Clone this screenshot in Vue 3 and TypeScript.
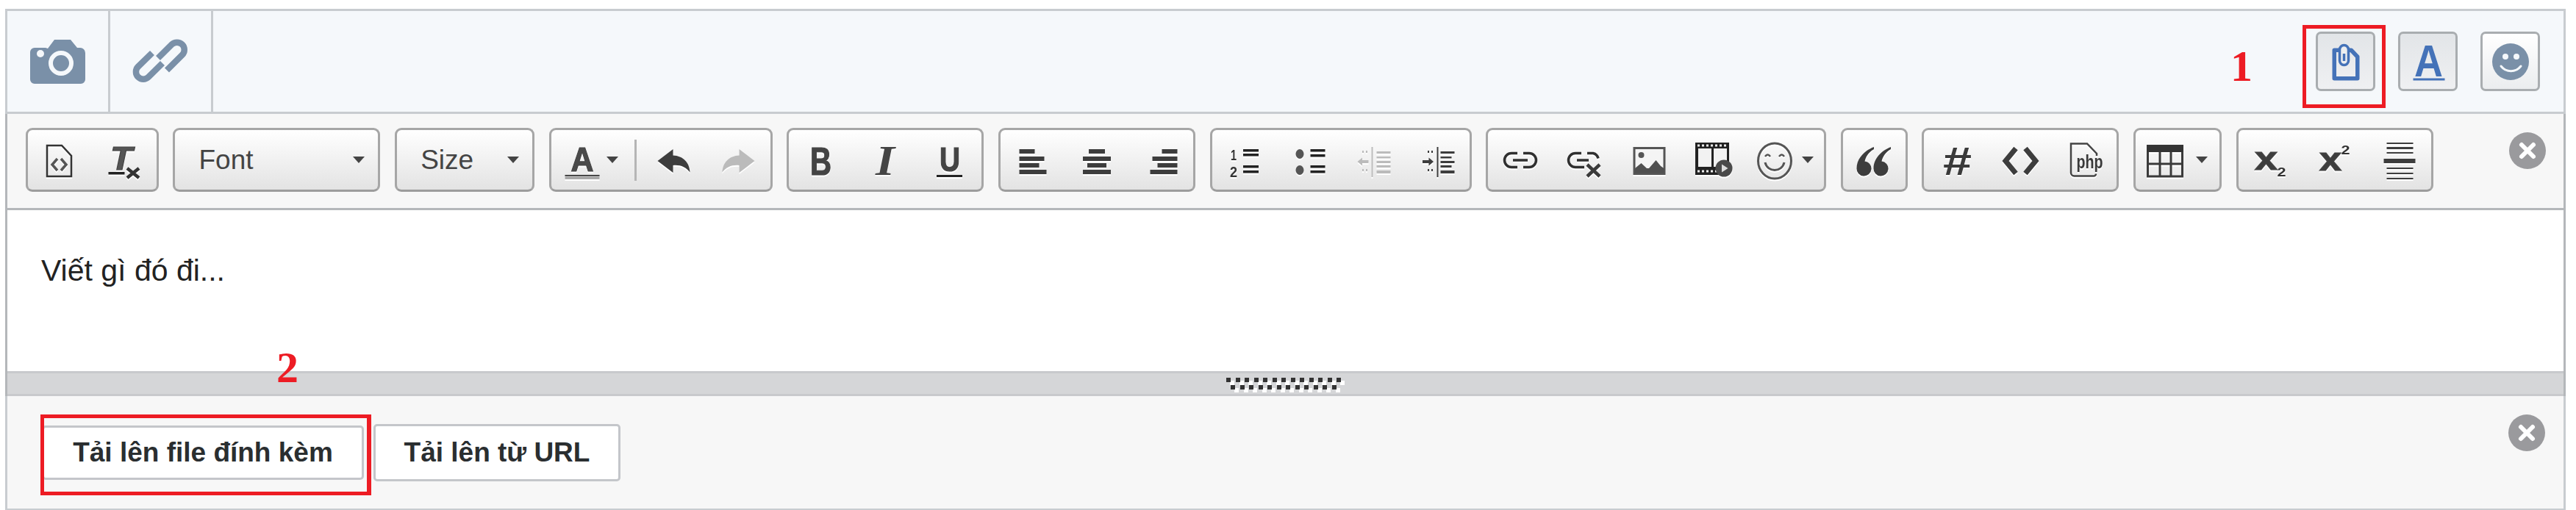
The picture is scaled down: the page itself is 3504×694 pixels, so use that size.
<script setup lang="ts">
const gripTop = 13
const gripBottom = 12
const placeholder = "Viết gì đó đi..."
</script>

<template>
  <div class="page">
    <div class="composer">
      <div class="topbar">
        <div class="cell">
          <svg width="75" height="60" viewBox="0 0 75 60">
            <path class="slate" d="M0 17a6 6 0 0 1 6-6h15l3 1 9-12h22l9 11h4a7 7 0 0 1 7 7v36a6 6 0 0 1-6 6H6a6 6 0 0 1-6-6z"/>
            <circle cx="14" cy="19" r="5" fill="#f5f8fb"/>
            <circle cx="42" cy="32" r="14" fill="none" stroke="#f5f8fb" stroke-width="6"/>
          </svg>
        </div>
        <div class="cell">
          <svg width="100" height="85" viewBox="0 0 100 85">
            <path d="M46 38 64.6 19.6a10 10 0 0 1 14.2 14.2L58 54.5" fill="none" stroke="#7a90a8" stroke-width="8.5"/>
            <path d="M38 31 18.9 49.6a10 10 0 0 0 14.1 14.2L52 45" fill="none" stroke="#7a90a8" stroke-width="8.5"/>
          </svg>
        </div>
        <div class="top-actions">
          <button class="square pressed">
            <svg width="60" height="60" viewBox="0 0 60 60">
              <path d="M14.250 14.250h23l8.500 9v29.500h-31.500z" fill="none" stroke="#4472b8" stroke-width="5.500" stroke-linejoin="round"/>
              <path d="M21.500 13.500a6 6 0 0 1 12 0v15a6 6 0 0 1-12 0z" fill="#eceef0" stroke="#4472b8" stroke-width="3.500"/>
              <path d="M27.500 19v10" fill="none" stroke="#4472b8" stroke-width="3.500"/>
            </svg>
          </button>
          <button class="square pressed">
            <svg width="60" height="60" viewBox="0 0 60 60">
              <text class="lbl bold" x="11" y="49.500" font-size="61" textLength="39" lengthAdjust="spacingAndGlyphs" fill="#4472b8">A</text>
              <rect x="9.500" y="52.500" width="43" height="3" fill="#4472b8"/>
            </svg>
          </button>
          <button class="square">
            <svg width="60" height="60" viewBox="0 0 60 60">
              <circle cx="30" cy="30" r="25" fill="#7a90a8"/>
              <circle cx="23" cy="23" r="4" fill="#f5f8fb"/>
              <circle cx="38" cy="23" r="4" fill="#f5f8fb"/>
              <path d="M17 36c7 9 20 9 27 0" fill="none" stroke="#f5f8fb" stroke-width="3" stroke-linecap="round"/>
            </svg>
          </button>
        </div>
      </div>

      <div class="editor-box">
        <div class="toolbar">
          <div class="tb-group">
            <span class="tb-btn">
              <svg class="ic" viewBox="0 0 60 60">
                <path d="M12 10h20l13 14v28H12z" fill="none" stroke="#333" stroke-width="2.500"/>
                <path d="M26 28l-7 8 7 8M31 28l7 8-7 8" fill="none" stroke="#555" stroke-width="3.500"/>
              </svg>
            </span>
            <span class="tb-btn">
              <svg class="ic" viewBox="0 0 60 60">
                <text class="lbl bold ital heavy" x="11" y="43" font-size="44" textLength="30" lengthAdjust="spacingAndGlyphs" fill="#555">T</text>
                <rect x="8.500" y="46" width="22" height="3.500" fill="#222"/>
                <path d="M34 41l16 13M50 41 34 54" stroke="#333" stroke-width="4.500"/>
              </svg>
            </span>
          </div>

          <div class="tb-group select font-select"><span>Font</span><i class="caret"></i></div>
          <div class="tb-group select size-select"><span>Size</span><i class="caret"></i></div>

          <div class="tb-group">
            <span class="tb-btn color-btn">
              <svg class="ic" viewBox="0 0 60 60">
                <text class="lbl bold heavy" x="14.500" y="45" font-size="46" textLength="31" lengthAdjust="spacingAndGlyphs" fill="#4a4a4a">A</text>
                <rect x="6.500" y="50" width="47" height="1.500" fill="#111"/>
                <rect x="6.500" y="51.500" width="47" height="4.500" fill="#a8a8a8"/>
              </svg>
              <i class="caret"></i>
            </span>
            <i class="divider"></i>
            <span class="tb-btn">
              <svg class="ic" viewBox="0 0 60 60">
                <path d="M7.500 31 28.500 15v8.500C42 24 51 33 51.500 46.500 46 39 38 36 28.500 37v10z"/>
              </svg>
            </span>
            <span class="tb-btn">
              <svg class="ic off" viewBox="0 0 60 60">
                <path transform="translate(60 0) scale(-1 1)" d="M7.500 31 28.500 15v8.500C42 24 51 33 51.500 46.500 46 39 38 36 28.500 37v10z"/>
              </svg>
            </span>
          </div>

          <div class="tb-group">
            <span class="tb-btn">
              <svg class="ic" viewBox="0 0 60 60">
                <text class="lbl bold heavy" x="15" y="50" font-size="53" textLength="29" lengthAdjust="spacingAndGlyphs" fill="#444">B</text>
              </svg>
            </span>
            <span class="tb-btn">
              <svg class="ic" viewBox="0 0 60 60">
                <text class="serif bold ital" x="17" y="50" font-size="58" textLength="26" lengthAdjust="spacingAndGlyphs" fill="#444">I</text>
              </svg>
            </span>
            <span class="tb-btn">
              <svg class="ic" viewBox="0 0 60 60">
                <text class="lbl bold heavy" x="16" y="45" font-size="46" textLength="28" lengthAdjust="spacingAndGlyphs" fill="#444">U</text>
                <rect x="12" y="50" width="35" height="3" fill="#222"/>
              </svg>
            </span>
          </div>

          <div class="tb-group">
            <span class="tb-btn">
              <svg class="ic" viewBox="0 0 60 60">
                <rect x="11.500" y="15" width="21" height="6"/><rect x="11.500" y="25" width="34" height="6"/>
                <rect x="11.500" y="34" width="27" height="6"/><rect x="11.500" y="43" width="37" height="6"/>
              </svg>
            </span>
            <span class="tb-btn">
              <svg class="ic" viewBox="0 0 60 60">
                <rect x="19" y="15" width="22" height="6"/><rect x="11" y="25" width="38" height="6"/>
                <rect x="17" y="34" width="26" height="6"/><rect x="11" y="43" width="38" height="6"/>
              </svg>
            </span>
            <span class="tb-btn">
              <svg class="ic" viewBox="0 0 60 60">
                <rect x="30.500" y="15" width="21" height="6"/><rect x="17.500" y="25" width="34" height="6"/>
                <rect x="24.500" y="34" width="27" height="6"/><rect x="14.500" y="43" width="37" height="6"/>
              </svg>
            </span>
          </div>

          <div class="tb-group">
            <span class="tb-btn">
              <svg class="ic" viewBox="0 0 60 60">
                <text class="lbl bold" x="11" y="30" font-size="21" textLength="8" lengthAdjust="spacingAndGlyphs" fill="#333">1</text>
                <text class="lbl bold" x="10" y="53" font-size="21" textLength="10" lengthAdjust="spacingAndGlyphs" fill="#333">2</text>
                <rect x="28" y="15" width="21" height="3.500" fill="#222"/><rect x="28" y="21" width="21" height="3.500" fill="#222"/>
                <rect x="28" y="37" width="21" height="3.500" fill="#222"/><rect x="28" y="44" width="21" height="3.500" fill="#222"/>
              </svg>
            </span>
            <span class="tb-btn">
              <svg class="ic" viewBox="0 0 60 60">
                <ellipse cx="18" cy="21.500" rx="5.500" ry="6.500" fill="#555"/><ellipse cx="18" cy="43.500" rx="5.500" ry="6.500" fill="#555"/>
                <rect x="32.500" y="15" width="20" height="3.500" fill="#222"/><rect x="32.500" y="22" width="20" height="3.500" fill="#222"/>
                <rect x="32.500" y="37" width="20" height="3.500" fill="#222"/><rect x="32.500" y="44" width="20" height="3.500" fill="#222"/>
              </svg>
            </span>
            <span class="tb-btn">
              <svg class="ic off" viewBox="0 0 60 60">
                <rect x="27.500" y="12" width="2" height="41"/>
                <rect x="34.500" y="18" width="19" height="3"/><rect x="34.500" y="25" width="19" height="2.500"/>
                <rect x="34.500" y="31" width="19" height="3"/><rect x="34.500" y="37" width="19" height="3"/><rect x="34.500" y="44" width="19" height="4"/>
                <path d="M8.500 32 15 26.500V30h8.500v4H15v3.500z"/>
                <path d="M15 17h2v3h-2zM20 17h2v3h-2zM15 42h2v3h-2zM20 42h2v3h-2z"/>
              </svg>
            </span>
            <span class="tb-btn">
              <svg class="ic" viewBox="0 0 60 60">
                <rect x="29.500" y="12" width="2" height="41"/>
                <rect x="34.500" y="18" width="19" height="3"/><rect x="34.500" y="25" width="15" height="2.500"/>
                <rect x="34.500" y="31" width="19" height="3"/><rect x="34.500" y="37" width="15" height="3"/><rect x="34.500" y="44" width="19" height="4"/>
                <path d="M25 32 18.500 26.500V30H10v4h8.500v3.500z"/>
                <path d="M17 17h2v3h-2zM22 17h2v3h-2zM17 42h2v3h-2zM22 42h2v3h-2z"/>
              </svg>
            </span>
          </div>

          <div class="tb-group">
            <span class="tb-btn">
              <svg class="ic" viewBox="0 0 60 60">
                <path class="chain" d="M26 20.500h-8a9.500 9.500 0 0 0 0 19h8M34 20.500h8a9.500 9.500 0 0 1 0 19h-8M20 30h20"/>
              </svg>
            </span>
            <span class="tb-btn">
              <svg class="ic" viewBox="0 0 60 60">
                <path class="chain" d="M26 20.500h-8a9.500 9.500 0 0 0 0 19h12M34 20.500h8a9.500 9.500 0 0 1 7 7M20 30h16"/>
                <path d="M34 36l17 16M51 36 34 52" stroke="#3a3a3a" stroke-width="4.500" fill="none"/>
              </svg>
            </span>
            <span class="tb-btn">
              <svg class="ic" viewBox="0 0 60 60">
                <rect x="10" y="13.500" width="41" height="35" fill="#f4f4f4" stroke="#555" stroke-width="3"/>
                <circle cx="19.500" cy="23" r="4" fill="#555"/>
                <path fill="#505050" d="M11 47v-6l8.500-7 7.500 7h3l9.500-11 6.500 8 5 3.500V47z"/>
              </svg>
            </span>
            <span class="tb-btn">
              <svg class="ic" viewBox="0 0 60 60">
                <path fill="#222" d="M6 6h46v44H6z"/>
                <path fill="#f2f2f2" d="M10 14h18v25H10zM31 14h18v25H31z"/>
                <path stroke="#eee" stroke-width="3" stroke-dasharray="3 3" d="M9 10h40M9 45h26" fill="none"/>
                <circle cx="45" cy="41" r="11.500" fill="#4a4a4a"/>
                <path fill="#ddd" d="M42 35.500 50.500 41 42 46.500z"/>
              </svg>
            </span>
            <span class="tb-btn emoji-btn">
              <svg class="ic" viewBox="0 0 60 60">
                <ellipse cx="30" cy="31" rx="22.500" ry="24" fill="none" stroke="#555" stroke-width="3"/>
                <path d="M17 25q3.500-5 7 0M36 25q3.500-5 7 0" fill="none" stroke="#555" stroke-width="2.500"/>
                <path d="M17 33c3 14 23 14 26 0" fill="none" stroke="#555" stroke-width="3"/>
              </svg>
              <i class="caret"></i>
            </span>
          </div>

          <div class="tb-group">
            <span class="tb-btn quote-btn">
              <svg class="ic" viewBox="0 0 60 60">
                <path d="M30 12C17 17 6.500 28 6.500 41a10 10 0 1 0 11-9.500C19 25 23 19 30 15z"/>
                <path transform="translate(23 0)" d="M30 12C17 17 6.500 28 6.500 41a10 10 0 1 0 11-9.500C19 25 23 19 30 15z"/>
              </svg>
            </span>
          </div>

          <div class="tb-group">
            <span class="tb-btn">
              <svg class="ic" viewBox="0 0 60 60">
                <text class="lbl bold ital" x="11" y="50" font-size="53" textLength="39" lengthAdjust="spacingAndGlyphs" fill="#3a3a3a">#</text>
              </svg>
            </span>
            <span class="tb-btn">
              <svg class="ic" viewBox="0 0 60 60">
                <path d="M24 14 10 31l14 17M37 14l14 17-14 17" fill="none" stroke="#3d3d3d" stroke-width="7"/>
              </svg>
            </span>
            <span class="tb-btn">
              <svg class="ic" viewBox="0 0 60 60">
                <path d="M46 24V21L33 7.500H11V47a4.500 4.500 0 0 0 4.500 4.500H42a3 3 0 0 0 3-3" fill="none" stroke="#444" stroke-width="2.500"/>
                <text class="lbl bold" x="18.500" y="41" font-size="25" textLength="36" lengthAdjust="spacingAndGlyphs" fill="#3a3a3a">php</text>
              </svg>
            </span>
          </div>

          <div class="tb-group">
            <span class="tb-btn table-btn">
              <svg class="ic" viewBox="0 0 60 60">
                <rect x="5" y="9" width="50" height="10" fill="#333"/>
                <path d="M6.500 19v33h47V19M23 19v33M38 19v33M6.500 35h47" fill="none" stroke="#3a3a3a" stroke-width="3"/>
              </svg>
              <i class="caret"></i>
            </span>
          </div>

          <div class="tb-group">
            <span class="tb-btn">
              <svg class="ic" viewBox="0 0 60 60">
                <text class="lbl bold heavy" x="9" y="43" font-size="45" textLength="31" lengthAdjust="spacingAndGlyphs" fill="#3d3d3d">x</text>
                <text class="lbl bold" x="39.500" y="52" font-size="17" textLength="12" lengthAdjust="spacingAndGlyphs" fill="#333">2</text>
              </svg>
            </span>
            <span class="tb-btn">
              <svg class="ic" viewBox="0 0 60 60">
                <text class="lbl bold heavy" x="9" y="44" font-size="45" textLength="30" lengthAdjust="spacingAndGlyphs" fill="#3d3d3d">x</text>
                <text class="lbl bold" x="38.500" y="22" font-size="17" textLength="12" lengthAdjust="spacingAndGlyphs" fill="#333">2</text>
              </svg>
            </span>
            <span class="tb-btn">
              <svg class="ic" viewBox="0 0 60 60">
                <rect x="13.500" y="6" width="36" height="2"/><rect x="13.500" y="12" width="36" height="3"/><rect x="13.500" y="19" width="36" height="2"/>
                <rect x="9.500" y="28" width="43" height="6"/>
                <rect x="13.500" y="40" width="36" height="2"/><rect x="13.500" y="47" width="36" height="2"/><rect x="13.500" y="54" width="36" height="2"/>
              </svg>
            </span>
          </div>

          <svg class="close tb-close" width="50" height="50" viewBox="0 0 50 50">
            <circle cx="25" cy="25" r="25" fill="#9a9a9d"/>
            <path d="M17 17l16 16M33 17 17 33" stroke="#fff" stroke-width="6" stroke-linecap="round"/>
          </svg>
        </div>

        <div class="editor">{{ placeholder }}</div>

        <div class="resizer">
          <div class="grip-row"><i v-for="n in gripTop" :key="n"></i></div>
          <div class="grip-row"><i v-for="n in gripBottom" :key="n"></i></div>
        </div>
      </div>

      <div class="attach">
        <div class="upload-tabs">
          <button class="upload first">Tải lên file đính kèm</button>
          <button class="upload second">Tải lên từ URL</button>
        </div>
        <svg class="close" width="50" height="50" viewBox="0 0 50 50">
          <circle cx="25" cy="25" r="25" fill="#9a9a9d"/>
          <path d="M17 17l16 16M33 17 17 33" stroke="#fff" stroke-width="6" stroke-linecap="round"/>
        </svg>
      </div>
    </div>

    <div class="mark mark-top"></div>
    <div class="mark mark-bottom"></div>
    <span class="num num-1">1</span>
    <span class="num num-2">2</span>
  </div>
</template>

<style scoped>
.page {
  position: relative;
  width: 3504px;
  height: 694px;
  overflow: hidden;
  background: #fff;
  font-family: "Liberation Sans", Arial, sans-serif;
}
svg {
  overflow: visible;
}
.composer {
  width: 3483px;
  margin-left: 7px;
  padding-top: 12px;
}

.topbar {
  display: flex;
  align-items: stretch;
  box-sizing: border-box;
  height: 143px;
  border: 3px solid #c8ccd0;
  background: #f5f8fb;
}
.cell {
  display: flex;
  align-items: center;
  justify-content: center;
  width: 140px;
  box-sizing: border-box;
  border-right: 3px solid #c8ccd0;
}
.top-actions {
  display: flex;
  align-items: center;
  gap: 31px;
  margin-left: auto;
  padding-right: 32px;
}
.square {
  display: flex;
  align-items: center;
  justify-content: center;
  box-sizing: border-box;
  width: 81px;
  height: 81px;
  padding: 0;
  border: 3px solid #a9adb0;
  border-radius: 7px;
  background: linear-gradient(#fff, #ebedef);
}
.square.pressed {
  background: linear-gradient(#e2e5e8, #eff0f2);
}
.slate { fill: #7a90a8; }

.editor-box {
  border: solid #b4b7ba;
  border-width: 0 3px;
}
.toolbar {
  display: flex;
  align-items: flex-start;
  gap: 19.700px;
  box-sizing: border-box;
  height: 131px;
  padding: 19px 24px 0 25px;
  border-bottom: 3px solid #b4b7ba;
  background: #f7f7f7;
}
.tb-group {
  display: flex;
  align-items: center;
  box-sizing: border-box;
  height: 87px;
  border: 3px solid #a6a6a6;
  border-bottom-color: #9c9c9c;
  border-radius: 9px;
  background: linear-gradient(#fff, #e3e3e3);
}
.tb-btn {
  display: flex;
  align-items: center;
  justify-content: center;
  width: 87.400px;
  height: 81px;
}
.ic {
  width: 60px;
  height: 60px;
  flex: none;
  fill: #3d3d3d;
  filter: drop-shadow(0 2px 0 #fff);
}
.ic.off {
  fill: #bbb;
}
.chain {
  fill: none;
  stroke: #2f2f2f;
  stroke-width: 3.500px;
}
.lbl { font-family: "Liberation Sans", Arial, sans-serif; }
.serif { font-family: "Liberation Serif", "Times New Roman", serif; }
.bold { font-weight: 700; }
.ital { font-style: italic; }
.heavy {
  stroke: #444;
  stroke-width: 1.200px;
}

.caret {
  flex: none;
  width: 0;
  height: 0;
  border-left: 8.500px solid transparent;
  border-right: 8.500px solid transparent;
  border-top: 9px solid #444;
}
.select {
  justify-content: space-between;
  padding: 0 18px 0 32px;
  font-size: 37px;
  color: #444;
}
.font-select { width: 282px; }
.size-select { width: 190px; }
.divider {
  width: 3px;
  height: 56px;
  margin-right: 7px;
  background: #b5b5b5;
}
.color-btn {
  justify-content: flex-start;
  width: 113px;
  padding-left: 12px;
  box-sizing: border-box;
}
.color-btn .caret { margin-left: 3px; }
.emoji-btn {
  justify-content: flex-start;
  width: 107px;
  padding-left: 10px;
  box-sizing: border-box;
}
.emoji-btn .caret { margin-left: 7px; }
.quote-btn { width: 85px; }
.table-btn {
  justify-content: flex-start;
  width: 114px;
  padding-left: 10px;
  box-sizing: border-box;
}
.table-btn .caret { margin-left: 12px; }
.close { flex: none; }
.tb-close {
  margin-top: 6px;
  margin-left: auto;
}

.editor {
  box-sizing: border-box;
  height: 219px;
  padding: 60px 0 0 46px;
  background: #fff;
  font-size: 41px;
  line-height: 44px;
  color: #222;
}

.resizer {
  display: flex;
  flex-direction: column;
  align-items: center;
  justify-content: center;
  gap: 4px;
  box-sizing: border-box;
  height: 34px;
  border: solid #c8c9cc;
  border-width: 3px 0;
  background: #d5d6d8;
}
.grip-row {
  display: flex;
  gap: 6.500px;
  margin-right: 5px;
}
.grip-row i {
  width: 6px;
  height: 6px;
  background: #333;
  box-shadow: 5px 4px 0 #fff;
}

.attach {
  display: flex;
  align-items: flex-start;
  justify-content: space-between;
  box-sizing: border-box;
  height: 156px;
  padding: 25px 25px 0 47px;
  border: 3px solid #c8ccd0;
  border-top: 0;
  background: #f7f7f7;
}
.upload-tabs {
  display: flex;
  align-items: center;
  gap: 13px;
  margin-top: 13px;
}
.upload {
  box-sizing: border-box;
  padding: 0;
  border: 3px solid #c4c6ca;
  border-radius: 5px;
  background: #fff;
  font-family: inherit;
  font-size: 37px;
  font-weight: 700;
  color: #2a2e30;
}
.first {
  width: 438px;
  height: 74px;
}
.second {
  width: 336px;
  height: 78px;
}

.mark {
  position: absolute;
  box-sizing: border-box;
  border: 5px solid #ed1c24;
}
.mark-top {
  left: 3132px;
  top: 34px;
  width: 113px;
  height: 113px;
}
.mark-bottom {
  left: 55px;
  top: 564px;
  width: 450px;
  height: 110px;
  border-right-width: 6px;
}
.num {
  position: absolute;
  font-family: "Liberation Serif", "Times New Roman", serif;
  font-size: 60px;
  font-weight: 700;
  line-height: 1;
  color: #ed1c24;
}
.num-1 {
  left: 3034px;
  top: 60px;
}
.num-2 {
  left: 376px;
  top: 470px;
}
</style>
